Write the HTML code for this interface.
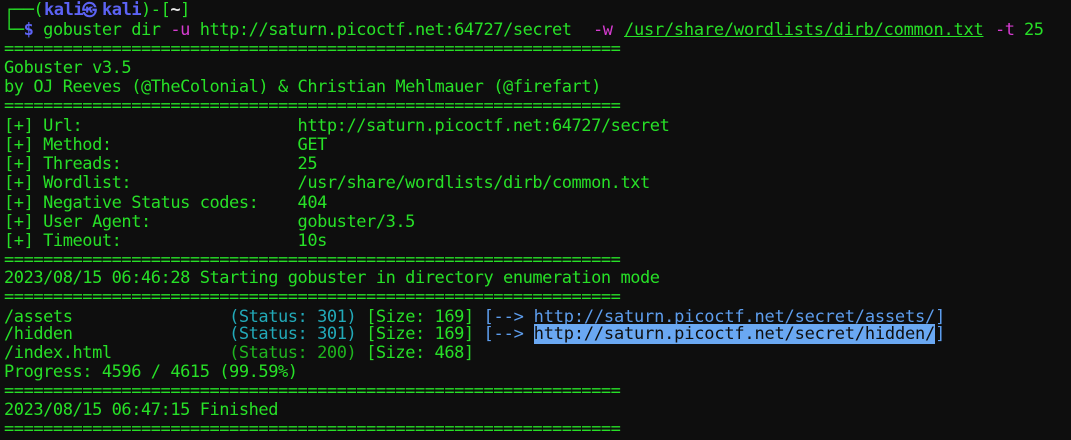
<!DOCTYPE html>
<html><head><meta charset="utf-8"><style>
html,body{margin:0;padding:0;background:#0e0e0e;width:1071px;height:438px;overflow:hidden}
.w{position:absolute;left:0;top:2px;width:1071px;height:438px}
.l{position:absolute;left:4px;height:19px;line-height:19px;font-family:"DejaVu Sans Mono","Liberation Mono",monospace;font-size:17px;letter-spacing:-0.45px;white-space:pre;color:#27e027}
.a{position:absolute;top:0}
.p{color:#5c63f5;font-weight:bold}
.m{color:#d63bd0}
.u{text-decoration:underline}
.c{color:#22a9b8}
.d{color:#1fb51f}
.b{color:#5d9ded;letter-spacing:-0.2px}
.h{background:#6aa8f2;color:#0e0e0e}
</style></head><body><div class="w">
<div class="l" style="top:-1px;width:300px">┌──(<span class="a p" style="left:40px">kali</span><span class="a p" style="left:78px;font-size:15px">㉿</span><span class="a p" style="left:98px">kali</span><span class="a" style="left:137px">)-[<span style="color:#e8e8e8;font-weight:bold">~</span>]</span></div>
<div class="l" style="top:19px;width:1067px">└─<span class="p">$</span> gobuster dir <span class="m">-u</span> http://saturn.picoctf.net:64727/secret<span class="a m" style="left:589px">-w</span><span class="a u" style="left:620px;letter-spacing:-0.25px">/usr/share/wordlists/dirb/common.txt</span><span class="a m" style="left:991px">-t</span><span class="a" style="left:1020px">25</span></div>
<div class="l" style="top:38px">===============================================================</div>
<div class="l" style="top:57px">Gobuster v3.5</div>
<div class="l" style="top:76px">by OJ Reeves (@TheColonial) &amp; Christian Mehlmauer (@firefart)</div>
<div class="l" style="top:95px">===============================================================</div>
<div class="l" style="top:115px">[+] Url:                      http://saturn.picoctf.net:64727/secret</div>
<div class="l" style="top:134px">[+] Method:                   GET</div>
<div class="l" style="top:153px">[+] Threads:                  25</div>
<div class="l" style="top:172px">[+] Wordlist:                 /usr/share/wordlists/dirb/common.txt</div>
<div class="l" style="top:192px">[+] Negative Status codes:    404</div>
<div class="l" style="top:211px">[+] User Agent:               gobuster/3.5</div>
<div class="l" style="top:230px">[+] Timeout:                  10s</div>
<div class="l" style="top:249px">===============================================================</div>
<div class="l" style="top:267px">2023/08/15 06:46:28 Starting gobuster in directory enumeration mode</div>
<div class="l" style="top:286px">===============================================================</div>
<div class="l" style="top:306px">/assets                <span class="c">(Status: 301)</span> [Size: 169] <span class="b">[--&gt; http://saturn.picoctf.net/secret/assets/]</span></div>
<div class="l" style="top:323px">/hidden                <span class="c">(Status: 301)</span> [Size: 169] <span class="b">[--&gt; <span class="h">http://saturn.picoctf.net/secret/hidden/</span>]</span></div>
<div class="l" style="top:342px">/index.html            <span class="d">(Status: 200)</span> [Size: 468]</div>
<div class="l" style="top:361px">Progress: 4596 / 4615 (99.59%)</div>
<div class="l" style="top:380px">===============================================================</div>
<div class="l" style="top:399px">2023/08/15 06:47:15 Finished</div>
<div class="l" style="top:418px">===============================================================</div>
</div></body></html>
